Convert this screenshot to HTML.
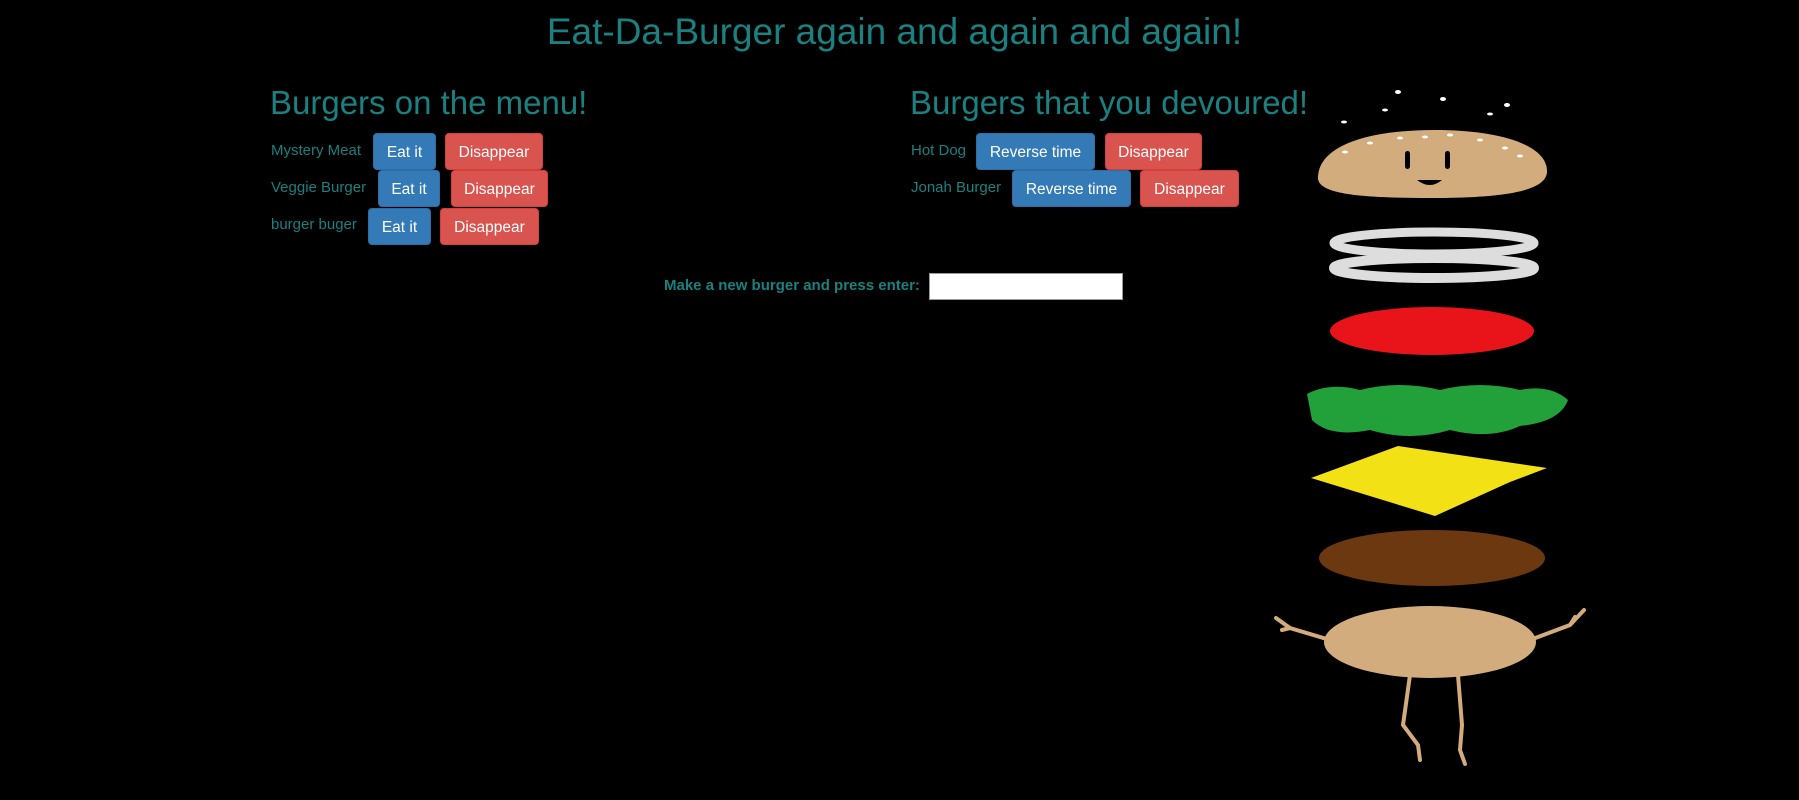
<!DOCTYPE html>
<html><head><meta charset="utf-8"><style>
body{margin:0;width:1799px;height:800px;background:#000;overflow:hidden;font-family:"Liberation Sans",Arial,sans-serif;color:#1a8080;position:relative}
.a{position:absolute;white-space:nowrap}
h1,h2{margin:0;font-weight:normal}
.t{font-size:37px;left:0;width:1789px;text-align:center;top:11px}
.h{font-size:33px;top:84px}
.l{font-size:15px;line-height:37px;height:37px}
.b{position:absolute;height:37px;line-height:37px;color:#fff;font-size:15.5px;text-align:center;border-radius:4px}
.p{background:#337ab7;border:1px solid #2e6da4;box-sizing:border-box}
.d{background:#d9534f;border:1px solid #d43f3a;box-sizing:border-box}
</style></head><body>
<h1 class="a t">Eat-Da-Burger again and again and again!</h1>
<h2 class="a h" style="left:270px">Burgers on the menu!</h2>
<h2 class="a h" style="left:910px">Burgers that you devoured!</h2>

<div class="a l" style="left:271px;top:132px">Mystery Meat</div>
<div class="b p" style="left:373px;top:133px;width:63px">Eat it</div>
<div class="b d" style="left:445px;top:133px;width:98px">Disappear</div>
<div class="a l" style="left:271px;top:169px">Veggie Burger</div>
<div class="b p" style="left:378px;top:170px;width:62px">Eat it</div>
<div class="b d" style="left:451px;top:170px;width:97px">Disappear</div>
<div class="a l" style="left:271px;top:206px">burger buger</div>
<div class="b p" style="left:368px;top:208px;width:63px">Eat it</div>
<div class="b d" style="left:440px;top:208px;width:99px">Disappear</div>

<div class="a l" style="left:911px;top:132px">Hot Dog</div>
<div class="b p" style="left:976px;top:133px;width:119px">Reverse time</div>
<div class="b d" style="left:1105px;top:133px;width:97px">Disappear</div>
<div class="a l" style="left:911px;top:169px">Jonah Burger</div>
<div class="b p" style="left:1012px;top:170px;width:119px">Reverse time</div>
<div class="b d" style="left:1140px;top:170px;width:99px">Disappear</div>

<div class="a" style="left:664px;top:277px;font-size:15px;font-weight:bold">Make a new burger and press enter:</div>
<div class="a" style="left:929px;top:273px;width:194px;height:27px;background:#fff;border:1px solid #999;box-sizing:border-box"></div>

<svg class="a" style="left:0;top:0" width="1799" height="800">
<g fill="#fff"><ellipse cx="1398" cy="92" rx="3" ry="2"/><ellipse cx="1443" cy="99" rx="3" ry="2"/><ellipse cx="1507" cy="105" rx="3" ry="2"/><ellipse cx="1385" cy="110" rx="3" ry="1.5"/><ellipse cx="1344" cy="122" rx="3" ry="1.5"/><ellipse cx="1490" cy="114" rx="3" ry="1.5"/></g>
<path d="M1318 178 C1318 145 1370 130 1435 130 C1500 130 1548 145 1547 172 C1546 192 1500 198 1430 198 C1360 198 1318 194 1318 178Z" fill="#d2ac7c"/>
<g fill="#fff"><ellipse cx="1345" cy="152" rx="3" ry="1.5"/><ellipse cx="1370" cy="143" rx="3" ry="1.5"/><ellipse cx="1400" cy="138" rx="3" ry="1.5"/><ellipse cx="1450" cy="135" rx="3" ry="1.5"/><ellipse cx="1480" cy="140" rx="3" ry="1.5"/><ellipse cx="1505" cy="148" rx="3" ry="1.5"/><ellipse cx="1520" cy="156" rx="3" ry="1.5"/><ellipse cx="1425" cy="137" rx="3" ry="1.5"/></g>
<rect x="1405" y="151" width="5" height="18" rx="2.5" fill="#000"/><rect x="1445" y="151" width="5" height="18" rx="2.5" fill="#000"/>
<path d="M1417 180 Q1430 190 1442 180Z" fill="#000"/>
<ellipse cx="1434" cy="243" rx="100" ry="11" fill="none" stroke="#ddd" stroke-width="9"/>
<ellipse cx="1434" cy="268" rx="100" ry="10" fill="none" stroke="#ddd" stroke-width="10"/>
<ellipse cx="1432" cy="331" rx="102" ry="24" fill="#e8141a"/>
<path d="M1307 394 Q1330 382 1360 390 Q1400 380 1440 390 Q1480 380 1520 390 Q1550 384 1568 400 Q1560 422 1520 426 Q1490 440 1450 430 Q1410 442 1370 430 Q1330 438 1312 420Z" fill="#22a03a"/>
<path d="M1311 478 L1398 446 L1547 468 L1510 482 L1435 516 Z" fill="#f2e114"/>
<ellipse cx="1432" cy="558" rx="113" ry="28" fill="#6b3810"/>
<g stroke="#d2ac7c" stroke-width="4" fill="none" stroke-linecap="round"><path d="M1330 640 L1290 628 L1276 618 M1290 628 L1282 630"/><path d="M1530 640 L1570 625 L1584 610 M1570 625 L1575 617"/><path d="M1410 675 L1403 725 L1418 745 L1420 760"/><path d="M1458 675 L1462 725 L1460 750 L1465 764"/></g>
<ellipse cx="1430" cy="642" rx="106" ry="36" fill="#d2ac7c"/>
</svg>
</body></html>
